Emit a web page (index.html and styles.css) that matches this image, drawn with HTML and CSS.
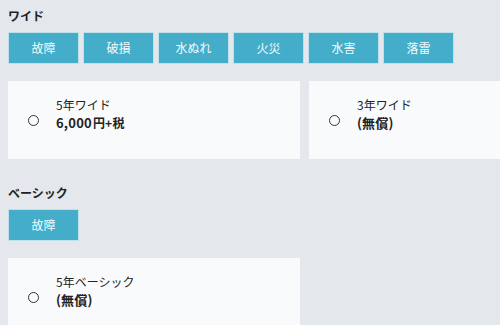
FILE: index.html
```html
<!DOCTYPE html>
<html>
	<head>
		<meta charset="utf-8"/>
		<meta name="viewport" content="width=device-width"/>
		<link rel="stylesheet" href="styles.css">
	</head>
	<body>
		<div class="plan">
			<h3>ワイド</h3>
			<div class="tags">
				<div class="tag">故障</div>
				<div class="tag">破損</div>
				<div class="tag">水ぬれ</div>
				<div class="tag">火災</div>
				<div class="tag">水害</div>
				<div class="tag">落雷</div>
			</div>
			<div class="options">
				<label class="option">
					<span class="radio"></span>
					<span class="text">
						<span class="name">5年ワイド</span>
						<span class="price">6,000<small>円+税</small></span>
					</span>
				</label>
				<label class="option">
					<span class="radio"></span>
					<span class="text">
						<span class="name">3年ワイド</span>
						<span class="price">(無償)</span>
					</span>
				</label>
			</div>
		</div>
		<div class="plan">
			<h3>ベーシック</h3>
			<div class="tags">
				<div class="tag">故障</div>
			</div>
			<div class="options">
				<label class="option">
					<span class="radio"></span>
					<span class="text">
						<span class="name">5年ベーシック</span>
						<span class="price">(無償)</span>
					</span>
				</label>
			</div>
		</div>
	</body>
</html>
```

FILE: styles.css
```css
html{
	overflow:hidden;
}
body{
	margin:0;
	padding:8px;
	background-color:#e4e8ec;
	font-family:"Noto Sans CJK JP","Noto Sans",sans-serif;
	color:#222;
}
.plan{
	margin-bottom:26px;
}
.plan h3{
	margin:0 0 8px;
	font-size:12px;
	line-height:16px;
	font-weight:bold;
}
.tags{
	display:flex;
	gap:4px;
	margin-bottom:17px;
}
.tag{
	box-sizing:border-box;
	width:71px;
	height:32px;
	line-height:30px;
	text-align:center;
	font-size:12px;
	color:#f4fbfd;
	background-color:#44adc9;
	border:1px solid #bfe1ea;
}
.options{
	display:grid;
	grid-template-columns:292px 292px;
	gap:9px;
}
.option{
	box-sizing:border-box;
	height:78px;
	display:flex;
	align-items:center;
	padding-left:20px;
	background-color:#f9fafc;
}
.radio{
	box-sizing:border-box;
	width:11px;
	height:11px;
	border:1.5px solid #333;
	border-radius:50%;
	margin-right:17px;
	flex-shrink:0;
}
.text{
	align-self:flex-start;
	padding-top:15px;
	display:flex;
	flex-direction:column;
	font-size:12px;
	line-height:18px;
}
.price{
	font-size:13px;
	font-weight:bold;
	letter-spacing:0.2px;
}
.price small{
	font-size:12px;
	margin-left:1px;
}
```
